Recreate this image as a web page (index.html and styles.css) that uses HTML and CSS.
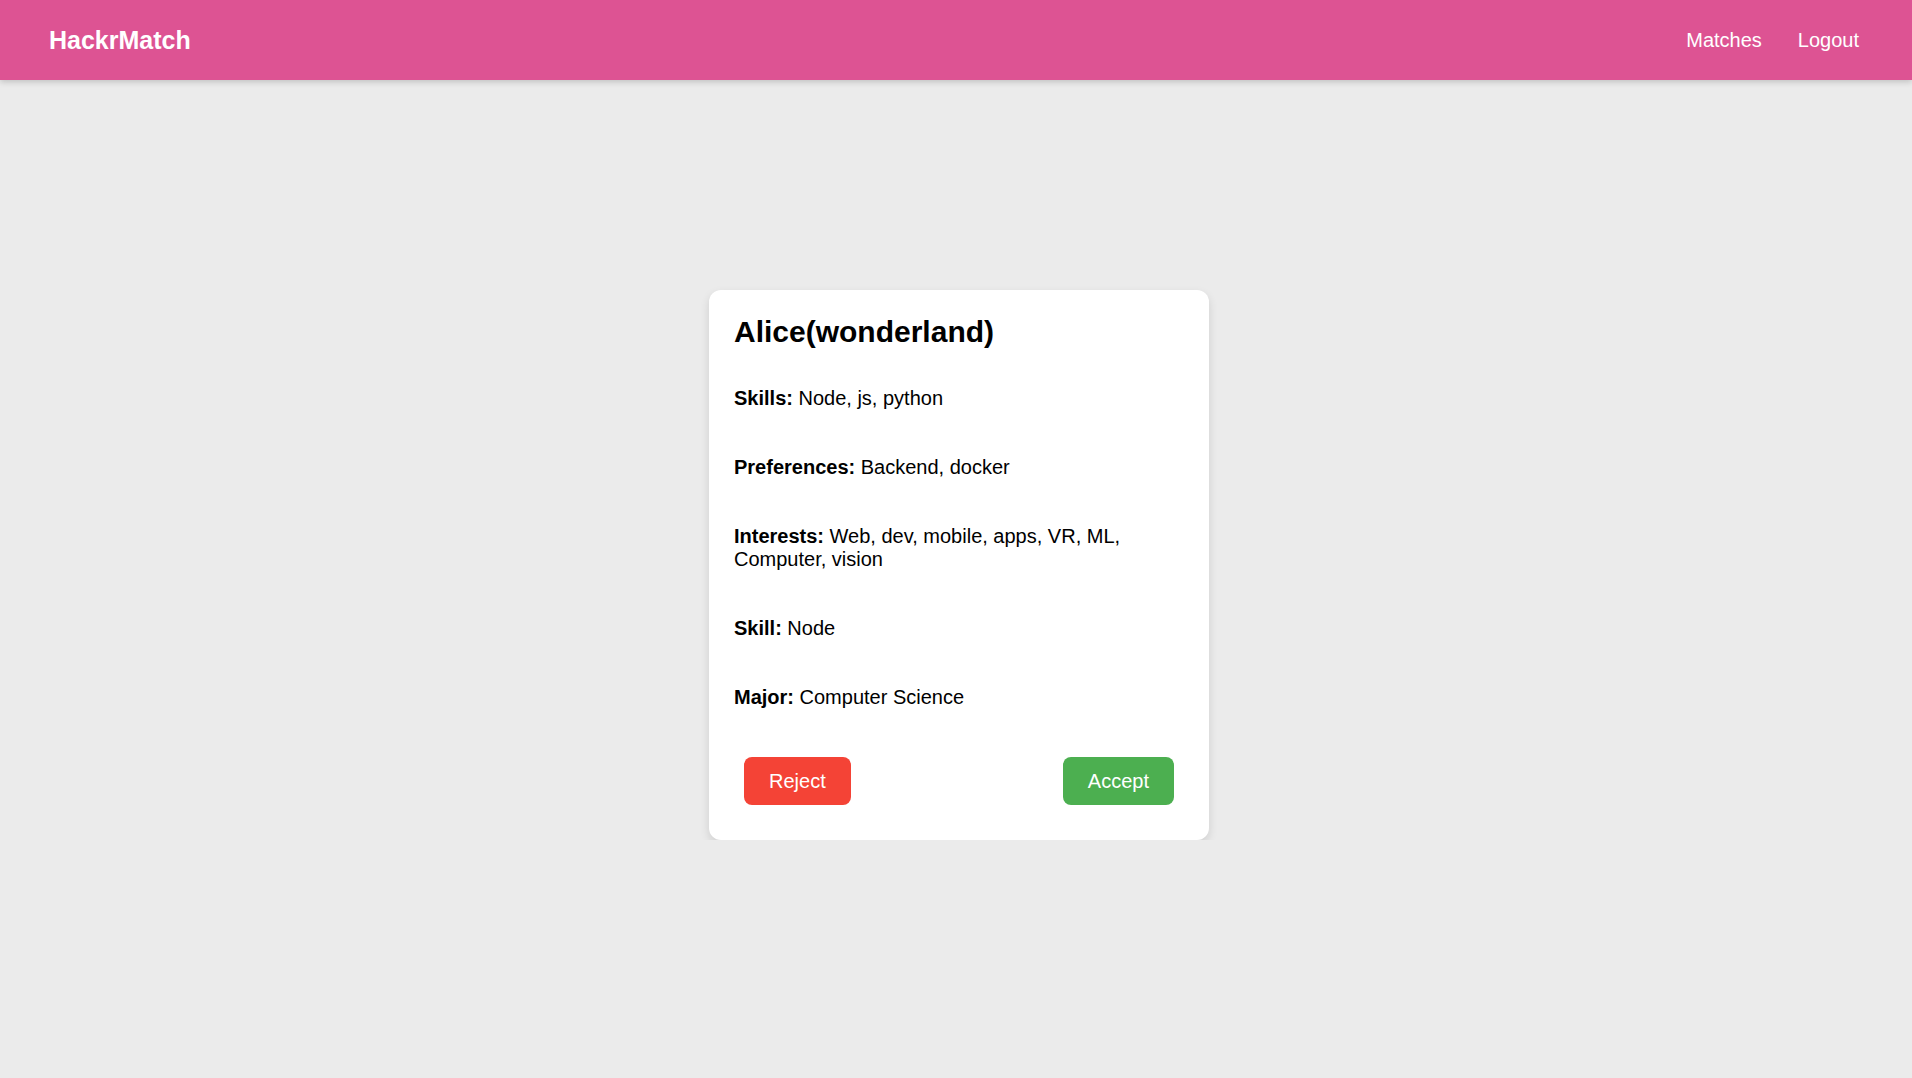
FILE: index.html
```html
<!DOCTYPE html>
<html>
<head>
    <title>HackrMatch</title>
    <link rel="stylesheet" href="styles.css">
</head>
<body>
    <header class="navbar">
        <a class="brand" href="#">HackrMatch</a>
        <nav class="nav-links">
            <a href="#">Matches</a>
            <a href="#">Logout</a>
        </nav>
    </header>

    <main class="main">
        <div class="card">
            <h2 class="card-title">Alice(wonderland)</h2>
            <p><strong>Skills:</strong> Node, js, python</p>
            <p><strong>Preferences:</strong> Backend, docker</p>
            <p><strong>Interests:</strong> Web, dev, mobile, apps, VR, ML, Computer, vision</p>
            <p><strong>Skill:</strong> Node</p>
            <p><strong>Major:</strong> Computer Science</p>
            <div class="actions">
                <button class="btn btn-reject">Reject</button>
                <button class="btn btn-accept">Accept</button>
            </div>
        </div>
    </main>
</body>
</html>
```

FILE: styles.css
```css
body {
    font-family: 'Liberation Sans', Arial, sans-serif;
    background-color: #ebebeb;
    color: #000;
    margin: 0;
    padding: 0;
}
.navbar {
    height: 80px;
    background-color: #dd5393;
    display: flex;
    align-items: center;
    justify-content: space-between;
    padding: 0 53px 0 49px;
    box-shadow: 0 2px 6px rgba(0,0,0,0.18);
}
.brand {
    color: #fff;
    font-size: 25px;
    font-weight: bold;
    text-decoration: none;
}
.nav-links {
    display: flex;
    gap: 36px;
}
.nav-links a {
    color: #fff;
    font-size: 20px;
    text-decoration: none;
}
.main {
    display: flex;
    justify-content: center;
    padding: 210px 0 0 6px;
}
.card {
    width: 500px;
    box-sizing: border-box;
    padding: 25px 25px 35px;
    background-color: #fff;
    border-radius: 12px;
    box-shadow: 0 4px 10px rgba(0,0,0,0.12);
}
.card-title {
    font-size: 30px;
    margin: 0 0 38px;
}
.card p {
    font-size: 20px;
    margin: 0 0 46px;
}
.card p:last-of-type {
    margin-bottom: 0;
}
.actions {
    display: flex;
    justify-content: space-between;
    padding: 0 10px;
    margin-top: 48px;
}
.btn {
    font-family: inherit;
    font-size: 20px;
    line-height: 24px;
    color: #fff;
    border: none;
    border-radius: 8px;
    padding: 12px 25px;
    cursor: pointer;
}
.btn-reject {
    background-color: #f44336;
}
.btn-accept {
    background-color: #4caf50;
}
```
